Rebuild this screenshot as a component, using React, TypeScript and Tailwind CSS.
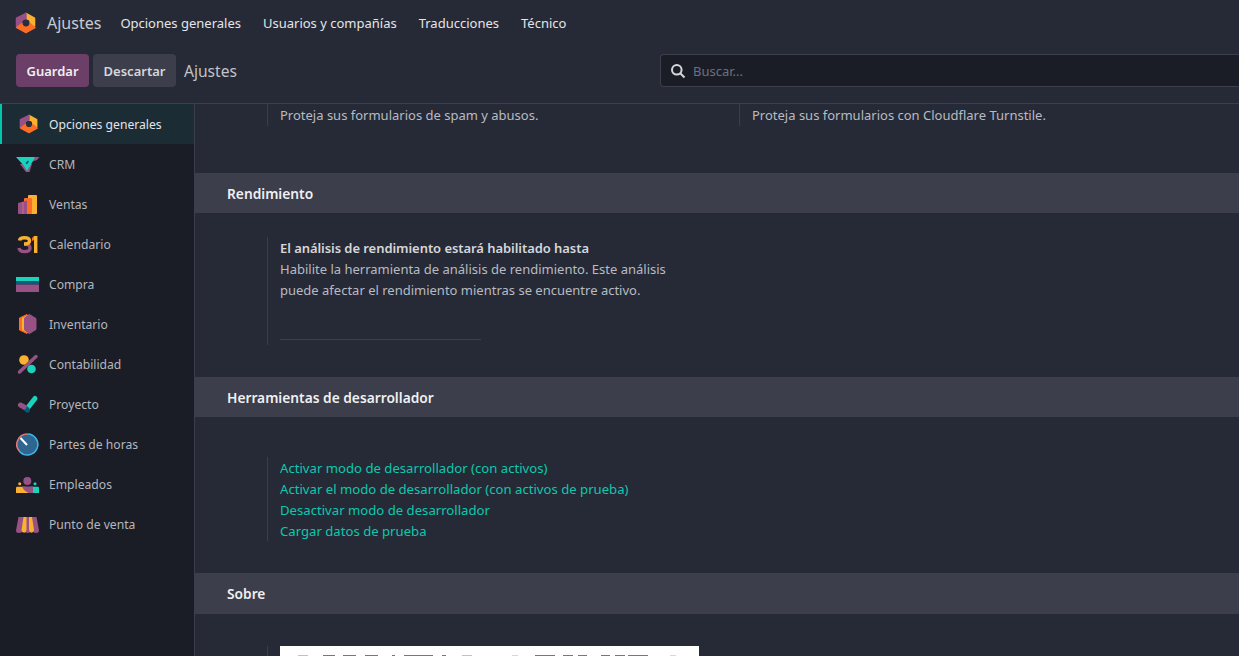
const font = "font-['Noto_Sans',sans-serif]";

function OdooHex({ size = 22 }: { size?: number }) {
  return (
    <svg width={size} height={size} viewBox="0 0 22 22" strokeLinejoin="round">
      <path d="M11 1.5 L19.5 6.2 V14 L15 11.5 V8.5 L11 6.5 Z" fill="#fbb130" stroke="#fbb130" strokeWidth="1.5" />
      <path d="M1.5 6.2 L11 1.5 V6.5 L7 8.5 V11.5 L1.5 15 Z" fill="#985184" stroke="#985184" strokeWidth="1.5" />
      <path d="M1.8 15.5 L7 11.5 L11 14.5 L15 11.5 L20 15.5 L11 20.5 Z" fill="#fc6d26" stroke="#fc6d26" strokeWidth="1.5" />
      <circle cx="11" cy="11" r="3.4" fill="#2b2d3a" />
    </svg>
  );
}

function CrmIcon() {
  return (
    <svg width="24" height="24" viewBox="0 0 24 24">
      <path d="M4 12 L10 20 H13.5 L16 12 Z" fill="#985184" />
      <path d="M13 5 H23.5 L21 8 L15 10 Z" fill="#985184" />
      <path d="M0 5 H17 L19 5.5 L11 19 L8 14 Z" fill="#1ad3bb" />
      <path d="M9.5 11 L12 8.5 L13 9.5 L11 12.5 Z" fill="#005e7a" />
    </svg>
  );
}

function VentasIcon() {
  return (
    <svg width="24" height="24" viewBox="0 0 24 24">
      <rect x="12" y="3" width="9" height="19" rx="1" fill="#fbb130" />
      <rect x="8" y="6" width="8" height="16" rx="1" fill="#fc6d26" />
      <path d="M2 11 L11 8.5 V22 H3 a1 1 0 0 1 -1 -1 Z" fill="#985184" />
      <rect x="6.5" y="10" width="1" height="12" fill="#c76a8f" />
    </svg>
  );
}

function CalendarIcon() {
  return (
    <svg width="24" height="24" viewBox="0 0 24 24" fill="none" strokeWidth="3.4">
      <path d="M8 12 Q14 12 14 16 Q14 19.6 8.5 19.6 Q3.5 19.6 3 16" stroke="#985184" />
      <path d="M3.5 8.5 Q4 5.7 8.5 5.7 Q13.5 5.7 13.5 8.7 Q13.5 12 8 12" stroke="#fbb130" />
      <rect x="18" y="4" width="3.4" height="17" fill="#fbb130" stroke="none" />
      <path d="M18 4 V8 L16 9 V6 Z" fill="#fc6d26" stroke="none" />
    </svg>
  );
}

function CompraIcon() {
  return (
    <svg width="23" height="24" viewBox="0 0 23 24">
      <rect x="0" y="5" width="23" height="4" fill="#1ad3bb" />
      <rect x="0" y="9" width="23" height="3.5" fill="#005e7a" />
      <rect x="0" y="12.5" width="23" height="7.5" fill="#985184" />
    </svg>
  );
}

function InventarioIcon() {
  return (
    <svg width="24" height="24" viewBox="0 0 24 24" strokeLinejoin="round">
      <path d="M11 2.5 L3.5 6 V18 L11 21.5 Z" fill="#fc6d26" stroke="#fc6d26" />
      <path d="M13 2.5 L6 6 V18 L13 21.5 Z" fill="#fbb130" />
      <path d="M13.5 2.5 L20 6.5 V17.5 L13.5 21.5 L8.5 18 V6 Z" fill="#985184" stroke="#985184" />
    </svg>
  );
}

function ContabilidadIcon() {
  return (
    <svg width="24" height="24" viewBox="0 0 24 24">
      <circle cx="8" cy="8" r="4.8" fill="#fbb130" />
      <circle cx="15.5" cy="17" r="4.3" fill="#1ad3bb" />
      <path d="M3.5 20 L20 4.5" stroke="#985184" strokeWidth="3.5" strokeLinecap="round" />
    </svg>
  );
}

function ProyectoIcon() {
  return (
    <svg width="24" height="24" viewBox="0 0 24 24">
      <path d="M11.5 16 L19 6.5" stroke="#1ad3bb" strokeWidth="5" strokeLinecap="round" />
      <path d="M8 15 L11.5 18" stroke="#005e7a" strokeWidth="5" strokeLinecap="round" />
      <path d="M4.5 13 L8 15" stroke="#985184" strokeWidth="5" strokeLinecap="round" />
    </svg>
  );
}

function PartesIcon() {
  return (
    <svg width="24" height="24" viewBox="0 0 24 24">
      <circle cx="11.5" cy="12.5" r="10.5" fill="#2f6690" />
      <path d="M11.5 2 A10.5 10.5 0 1 1 4 20" fill="none" stroke="#3db4ea" strokeWidth="1.6" />
      <path d="M4 20 A10.5 10.5 0 0 1 11.5 2" fill="none" stroke="#e07a7a" strokeWidth="1.6" />
      <path d="M4.5 6 L11 13" stroke="#fff" strokeWidth="2" />
    </svg>
  );
}

function EmpleadosIcon() {
  return (
    <svg width="24" height="24" viewBox="0 0 24 24">
      <circle cx="11.3" cy="9" r="4" fill="#985184" />
      <circle cx="3.7" cy="11.7" r="1.5" fill="#fbb130" />
      <circle cx="19" cy="11.7" r="1.5" fill="#1ad3bb" />
      <path d="M0 21 V16 Q0 14.7 1.5 14.7 H10 L14 21 Z" fill="#fbb130" />
      <path d="M23 21 V16 Q23 14.7 21.5 14.7 H14 V21 Z" fill="#1ad3bb" />
      <path d="M6 14.5 H17 V21 H12.5 Q8 19 6 14.5 Z" fill="#985184" />
    </svg>
  );
}

function PosIcon() {
  return (
    <svg width="24" height="24" viewBox="0 0 24 24">
      <path d="M2.5 5 H20.5 L23 18.5 Q23 21 20 21 Q17.5 21 16 18.5 Q14 21 11.5 21 Q9 21 7.5 18.5 Q6 21 3 21 Q0 21 0 18.5 Z" fill="#985184" />
      <path d="M7.5 5 H10.5 V18 Q10 20.8 8 20.8 Q6 20.8 5.5 18 Z" fill="#fbb130" />
      <path d="M13 5 H16 L18 18 Q17.5 20.8 15.5 20.8 Q13.5 20.8 13 18 Z" fill="#fbb130" />
    </svg>
  );
}

const apps = [
  { name: 'CRM', icon: <CrmIcon /> },
  { name: 'Ventas', icon: <VentasIcon /> },
  { name: 'Calendario', icon: <CalendarIcon /> },
  { name: 'Compra', icon: <CompraIcon /> },
  { name: 'Inventario', icon: <InventarioIcon /> },
  { name: 'Contabilidad', icon: <ContabilidadIcon /> },
  { name: 'Proyecto', icon: <ProyectoIcon /> },
  { name: 'Partes de horas', icon: <PartesIcon /> },
  { name: 'Empleados', icon: <EmpleadosIcon /> },
  { name: 'Punto de venta', icon: <PosIcon /> },
];

const topMenu = ['Opciones generales', 'Usuarios y compañías', 'Traducciones', 'Técnico'];

const devLinks = [
  'Activar modo de desarrollador (con activos)',
  'Activar el modo de desarrollador (con activos de prueba)',
  'Desactivar modo de desarrollador',
  'Cargar datos de prueba',
];

// tops of the big letters in the image, cut off by the fold: [x, width, colour]
const letterTops: [number, number, string][] = [
  [298, 10, '#c9bdc6'], [323, 12, '#8a6a85'], [343, 13, '#8a6a85'], [365, 13, '#8a6a85'],
  [392, 3, '#8a6a85'], [404, 29, '#8a6a85'], [442, 4, '#8a6a85'], [462, 10, '#c9bdc6'],
  [512, 6, '#d8d8d8'], [535, 20, '#8a6a85'], [563, 10, '#8a6a85'], [578, 9, '#8a6a85'],
  [601, 9, '#8a6a85'], [615, 10, '#8a6a85'], [628, 20, '#8a6a85'], [670, 6, '#d8d8d8'],
];

function SectionTitle({ children, tall }: { children: string; tall?: boolean }) {
  return (
    <div className={`${tall ? 'h-[41px]' : 'h-10'} flex items-center pl-8 bg-[#3c3e4b] text-[13.75px] font-semibold text-[#f0f0f2]`}>
      {children}
    </div>
  );
}

export default function App() {
  return (
    <div className={`${font} w-[1239px] h-[656px] overflow-hidden flex flex-col bg-[#262a36] text-[13px] leading-[21px] text-[#b8bbc2]`}>
      <nav className="h-[46px] shrink-0 flex items-center pl-[15px]">
        <OdooHex />
        <span className="ml-[10px] text-[16px] text-[#c8cad0]">Ajustes</span>
        <div className="flex ml-[19px] gap-[22px] text-[#e4e5e8]">
          {topMenu.map(m => <span key={m}>{m}</span>)}
        </div>
      </nav>

      <div className="h-[58px] shrink-0 flex items-start pt-2 pl-4 border-b border-[#3c3e4b]">
        <button className="w-[73px] h-[33px] pt-px rounded bg-[#6c3f68] font-semibold text-[#f0f0f2]">Guardar</button>
        <button className="w-[83px] h-[33px] pt-px ml-1 rounded bg-[#3c3e4b] font-semibold text-[#d6d7db]">Descartar</button>
        <span className="ml-2 mt-[6px] text-[15.6px] leading-[22px] text-[#c0c3c9]">Ajustes</span>
        <div className="ml-auto w-[579px] h-[33px] flex items-center pl-[9px] rounded-l bg-[#1b1d26] border border-r-0 border-[#3c3e4b]">
          <svg width="16" height="16" viewBox="0 0 16 16" fill="none" stroke="#d6d7db" strokeWidth="2">
            <circle cx="6.8" cy="6.8" r="4.8" />
            <path d="M10.5 10.5 L14.5 14.5" />
          </svg>
          <span className="ml-[7px] pt-px text-[#6c7080]">Buscar...</span>
        </div>
      </div>

      <div className="flex flex-1 min-h-0">
        <aside className="w-[195px] shrink-0 bg-[#1b1d26] border-r border-[#3c3e4b] text-[12.15px] text-[#b4b7be]">
          <div className="h-10 flex items-center pl-[17px] bg-[#1b2c35] border-l-2 border-[#00c7a9] text-[#e4e5e8]">
            <OdooHex size={20} />
            <span className="ml-[10px]">Opciones generales</span>
          </div>
          {apps.map(a => (
            <div key={a.name} className="h-10 flex items-center pl-4">
              <span className="w-6 shrink-0 flex">{a.icon}</span>
              <span className="ml-[9px]">{a.name}</span>
            </div>
          ))}
        </aside>

        <main className="flex-1 min-w-0">
          <div className="h-[69px] flex items-start">
            <div className="ml-[72px] w-[472px] h-[22px] border-l border-[#3c3e4b] pl-3 pt-px">
              Proteja sus formularios de spam y abusos.
            </div>
            <div className="h-[22px] border-l border-[#3c3e4b] pl-3 pt-px">
              Proteja sus formularios con Cloudflare Turnstile.
            </div>
          </div>

          <SectionTitle>Rendimiento</SectionTitle>
          <div className="h-[164px] pt-6">
            <div className="ml-[72px] w-[440px] h-[108px] border-l border-[#3c3e4b] pl-3 pt-px">
              <div className="font-semibold tracking-[-0.06px] text-[#d6d7db]">El análisis de rendimiento estará habilitado hasta</div>
              <p>Habilite la herramienta de análisis de rendimiento. Este análisis puede afectar el rendimiento mientras se encuentre activo.</p>
              <div className="mt-[38px] w-[201px] border-b border-[#3c3e4b]" />
            </div>
          </div>

          <SectionTitle>Herramientas de desarrollador</SectionTitle>
          <div className="h-[156px] pt-10">
            <div className="ml-[72px] h-[84px] border-l border-[#3c3e4b] pl-3 pt-px flex flex-col text-[13.15px] text-[#0cc8ae]">
              {devLinks.map(l => <span key={l}>{l}</span>)}
            </div>
          </div>

          <SectionTitle tall>Sobre</SectionTitle>
          <div className="pt-8">
            <div className="ml-[72px] h-[80px] border-l border-[#3c3e4b] pl-3">
              <svg width="419" height="80" viewBox="280 646 419 80" className="block">
                <rect x="280" y="646" width="419" height="80" fill="#fff" />
                {letterTops.map(([x, w, c]) => <rect key={x} x={x} y="655" width={w} height="1" fill={c} />)}
              </svg>
            </div>
          </div>
        </main>
      </div>
    </div>
  );
}
